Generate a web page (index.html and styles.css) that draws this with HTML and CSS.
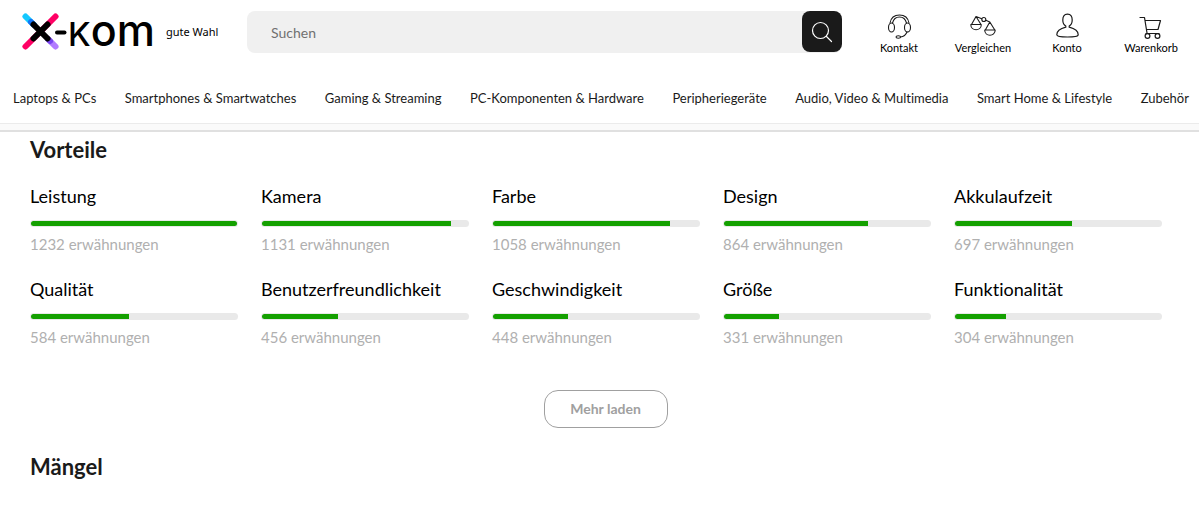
FILE: index.html
```html
<!DOCTYPE html>
<html lang="de">
<head>
<meta charset="utf-8">
<meta name="viewport" content="width=device-width, initial-scale=1">
<title>x-kom</title>
<link rel="stylesheet" href="styles.css">
</head>
<body>
<header class="header">
  <div class="topbar">
    <a class="logo" href="#">
      <svg class="logo-mark" viewBox="0 0 46 38" fill="none" stroke-width="6" stroke-linecap="round" aria-hidden="true">
        <path d="M3.500 3.500l8 8" stroke="#14c8ff"/>
        <path d="M9 9l3 3" stroke="#1473f5"/>
        <path d="M33.500 3.500L3.500 33.500" stroke="#ff0064"/>
        <path d="M27 27l6.500 6.500" stroke="#b27cff"/>
        <path d="M26 26l2 2" stroke="#7846f0"/>
        <path d="M11.500 11.500l14 14M25.500 11.500L11.500 25.500" stroke="#000"/>
        <path d="M35 19.500h7.500" stroke="#000" stroke-width="4"/>
      </svg>
      <span class="logo-name"><span class="logo-cap">K</span>om</span>
      <span class="slogan">gute Wahl</span>
    </a>
    <form class="search">
      <input class="search-input" type="search" placeholder="Suchen" aria-label="Suchen">
      <button class="search-button" type="button" aria-label="Suche starten">
        <svg class="search-icon" viewBox="0 0 22 22" fill="none" stroke="#fff" stroke-width="1.2" stroke-linecap="round"><circle cx="9.5" cy="9.5" r="8"/><path d="M15.500 15.500l5 5"/></svg>
      </button>
    </form>
    <nav class="actions" aria-label="Service">
      <a class="action" href="#">
        <svg class="action-icon" viewBox="0 0 26 26" fill="none" stroke="#1a1a1a" stroke-width="1.1" stroke-linecap="round" stroke-linejoin="round"><path d="M4 10C5 4.500 8.500 2 13.500 2S22 4.500 23 10M6.500 10c1-4 3.500-6 7-6s6 2 7 6"/><ellipse cx="5.500" cy="14.500" rx="3" ry="4.500"/><ellipse cx="21.500" cy="14.500" rx="3" ry="4.500"/><path d="M21 19c-1 2.500-3 4.500-6.500 5"/><ellipse cx="12.300" cy="24" rx="2.300" ry="1.200"/></svg>
        <span>Kontakt</span>
      </a>
      <a class="action" href="#">
        <svg class="action-icon" viewBox="0 0 26 26" fill="none" stroke="#1a1a1a" stroke-width="1.1" stroke-linecap="round" stroke-linejoin="round"><circle cx="13.800" cy="6.500" r="2"/><path d="M6 3.500l5.800 2.200M15.800 7.200l4 1.800M6 3.500L1.500 11.500h9.500L6 3.500zM.8 11.500c0 7 10.500 7 10.500 0zM19.800 9L15.300 17h9.500L19.800 9zM14.700 17c0 7 10.500 7 10.500 0z"/></svg>
        <span>Vergleichen</span>
      </a>
      <a class="action" href="#">
        <svg class="action-icon" viewBox="0 0 26 26" fill="none" stroke="#1a1a1a" stroke-width="1.2" stroke-linejoin="round"><path d="M13.500 1.200c-3.500 0-4.700 2.300-4.700 5.800 0 3 1 5 3 6v1.200c-5 1.300-9 4-9 7.500 0 1.700 4 2.300 10.700 2.300s10.700-.6 10.700-2.300c0-3.500-4-6.200-9-7.500V13c2-1 3-3 3-6 0-3.500-1.200-5.800-4.700-5.800z"/></svg>
        <span>Konto</span>
      </a>
      <a class="action" href="#">
        <svg class="action-icon" viewBox="0 0 26 26" fill="none" stroke="#1a1a1a" stroke-width="1.2" stroke-linecap="round" stroke-linejoin="round"><path d="M2 4.500h4.500L9 20M7 7.500h15.500L20 16.500H8.500M8 20.500h13"/><circle cx="9.500" cy="23" r="2.400"/><circle cx="19.500" cy="23" r="2.400"/></svg>
        <span>Warenkorb</span>
      </a>
    </nav>
  </div>
  <nav class="categories" aria-label="Kategorien">
    <a href="#">Laptops &amp; PCs</a>
    <a href="#">Smartphones &amp; Smartwatches</a>
    <a href="#">Gaming &amp; Streaming</a>
    <a href="#">PC-Komponenten &amp; Hardware</a>
    <a href="#">Peripheriegeräte</a>
    <a href="#">Audio, Video &amp; Multimedia</a>
    <a href="#">Smart Home &amp; Lifestyle</a>
    <a href="#">Zubehör</a>
  </nav>
</header>
<div class="divider"></div>
<main class="content">
  <h2 class="title">Vorteile</h2>
  <div class="features">
    <div class="feature"><h3 class="name">Leistung</h3><div class="bar"><div class="fill fill-full"></div></div><p class="count">1232 erwähnungen</p></div>
    <div class="feature"><h3 class="name">Kamera</h3><div class="bar"><div class="fill" style="width:91.8%"></div></div><p class="count">1131 erwähnungen</p></div>
    <div class="feature"><h3 class="name">Farbe</h3><div class="bar"><div class="fill" style="width:85.9%"></div></div><p class="count">1058 erwähnungen</p></div>
    <div class="feature"><h3 class="name">Design</h3><div class="bar"><div class="fill" style="width:70.1%"></div></div><p class="count">864 erwähnungen</p></div>
    <div class="feature"><h3 class="name">Akkulaufzeit</h3><div class="bar"><div class="fill" style="width:56.6%"></div></div><p class="count">697 erwähnungen</p></div>
    <div class="feature"><h3 class="name">Qualität</h3><div class="bar"><div class="fill" style="width:47.4%"></div></div><p class="count">584 erwähnungen</p></div>
    <div class="feature"><h3 class="name">Benutzerfreundlichkeit</h3><div class="bar"><div class="fill" style="width:37%"></div></div><p class="count">456 erwähnungen</p></div>
    <div class="feature"><h3 class="name">Geschwindigkeit</h3><div class="bar"><div class="fill" style="width:36.4%"></div></div><p class="count">448 erwähnungen</p></div>
    <div class="feature"><h3 class="name">Größe</h3><div class="bar"><div class="fill" style="width:26.9%"></div></div><p class="count">331 erwähnungen</p></div>
    <div class="feature"><h3 class="name">Funktionalität</h3><div class="bar"><div class="fill" style="width:24.7%"></div></div><p class="count">304 erwähnungen</p></div>
  </div>
  <button class="more" type="button">Mehr laden</button>
  <h2 class="title">Mängel</h2>
</main>
</body>
</html>
```
FILE: styles.css
```css
* { box-sizing: border-box; }
body {
  margin: 0;
  background: #fff;
  color: #1a1a1a;
  font-family: Lato, "Liberation Sans", sans-serif;
  font-variant-ligatures: none;
}
a { color: inherit; text-decoration: none; }
h2, h3, p { margin: 0; }

.topbar {
  display: flex;
  align-items: flex-start;
  padding: 11px 6px 0 22px;
  height: 74px;
}
.logo {
  display: flex;
  align-items: center;
  flex: 0 0 225px;
  height: 42px;
  color: #000;
}
.logo-mark { flex: none; width: 46px; height: 38px; }
.logo-name {
  flex: none;
  width: 98px;
  font: 500 43px/42px Inter, sans-serif;
  white-space: nowrap;
}
.logo-cap { font-size: 33px; }
.slogan { font: 11px/16px "Noto Sans", sans-serif; white-space: nowrap; }

.search { display: flex; flex: 1; height: 42px; background: #f0f0f0; border-radius: 8px; }
.search-input {
  flex: 1;
  min-width: 0;
  padding: 2px 24px 0;
  border: 0;
  background: transparent;
  font: 14px/20px Lato, sans-serif;
}
.search-input::placeholder { color: #707070; opacity: 1; }
.search-button {
  display: flex;
  align-items: center;
  justify-content: center;
  width: 40px;
  height: 41px;
  padding: 0;
  border: 0;
  border-radius: 8px;
  background: #1a1a1a;
}
.search-icon { width: 22px; height: 22px; }

.actions { display: flex; margin-left: 15px; }
.action {
  display: flex;
  flex-direction: column;
  align-items: center;
  gap: 1px;
  width: 84px;
  padding-top: 2px;
  color: #000;
  font-size: 11px;
  line-height: 16px;
}
.action-icon { width: 26px; height: 26px; }

.categories {
  display: flex;
  justify-content: space-between;
  padding: 14px 10px 15px 13px;
  font-size: 13px;
  line-height: 20px;
  white-space: nowrap;
}
.divider {
  height: 9px;
  border-top: 1px solid #ebebeb;
  border-bottom: 2px solid #e0e0e0;
  background: #fafafa;
}

.content { padding: 4px 18px 24px 30px; }
.title { font-size: 22px; line-height: 28px; font-weight: 700; }
.features {
  display: grid;
  grid-template-columns: repeat(5, 1fr);
  gap: 23px;
  margin: 19px 19px 0 0;
}
.name { color: #000; font-size: 18px; line-height: 26px; font-weight: 400; }
.bar { height: 7px; margin: 11px 0 8px; padding: 1px; border-radius: 4px; background: #e9e9e9; overflow: hidden; }
.fill { height: 5px; background: #14a000; border-radius: 3px 0 0 3px; }
.fill-full { border-radius: 3px; }
.count { color: #b0b0b0; font-size: 15px; line-height: 18px; }
.more {
  display: block;
  width: 124px;
  height: 38px;
  margin: 44px auto 25px;
  border: 1px solid #a0a0a0;
  border-radius: 14px;
  background: #fff;
  color: #a0a0a0;
  font: 700 14px/20px Lato, sans-serif;
}
```
